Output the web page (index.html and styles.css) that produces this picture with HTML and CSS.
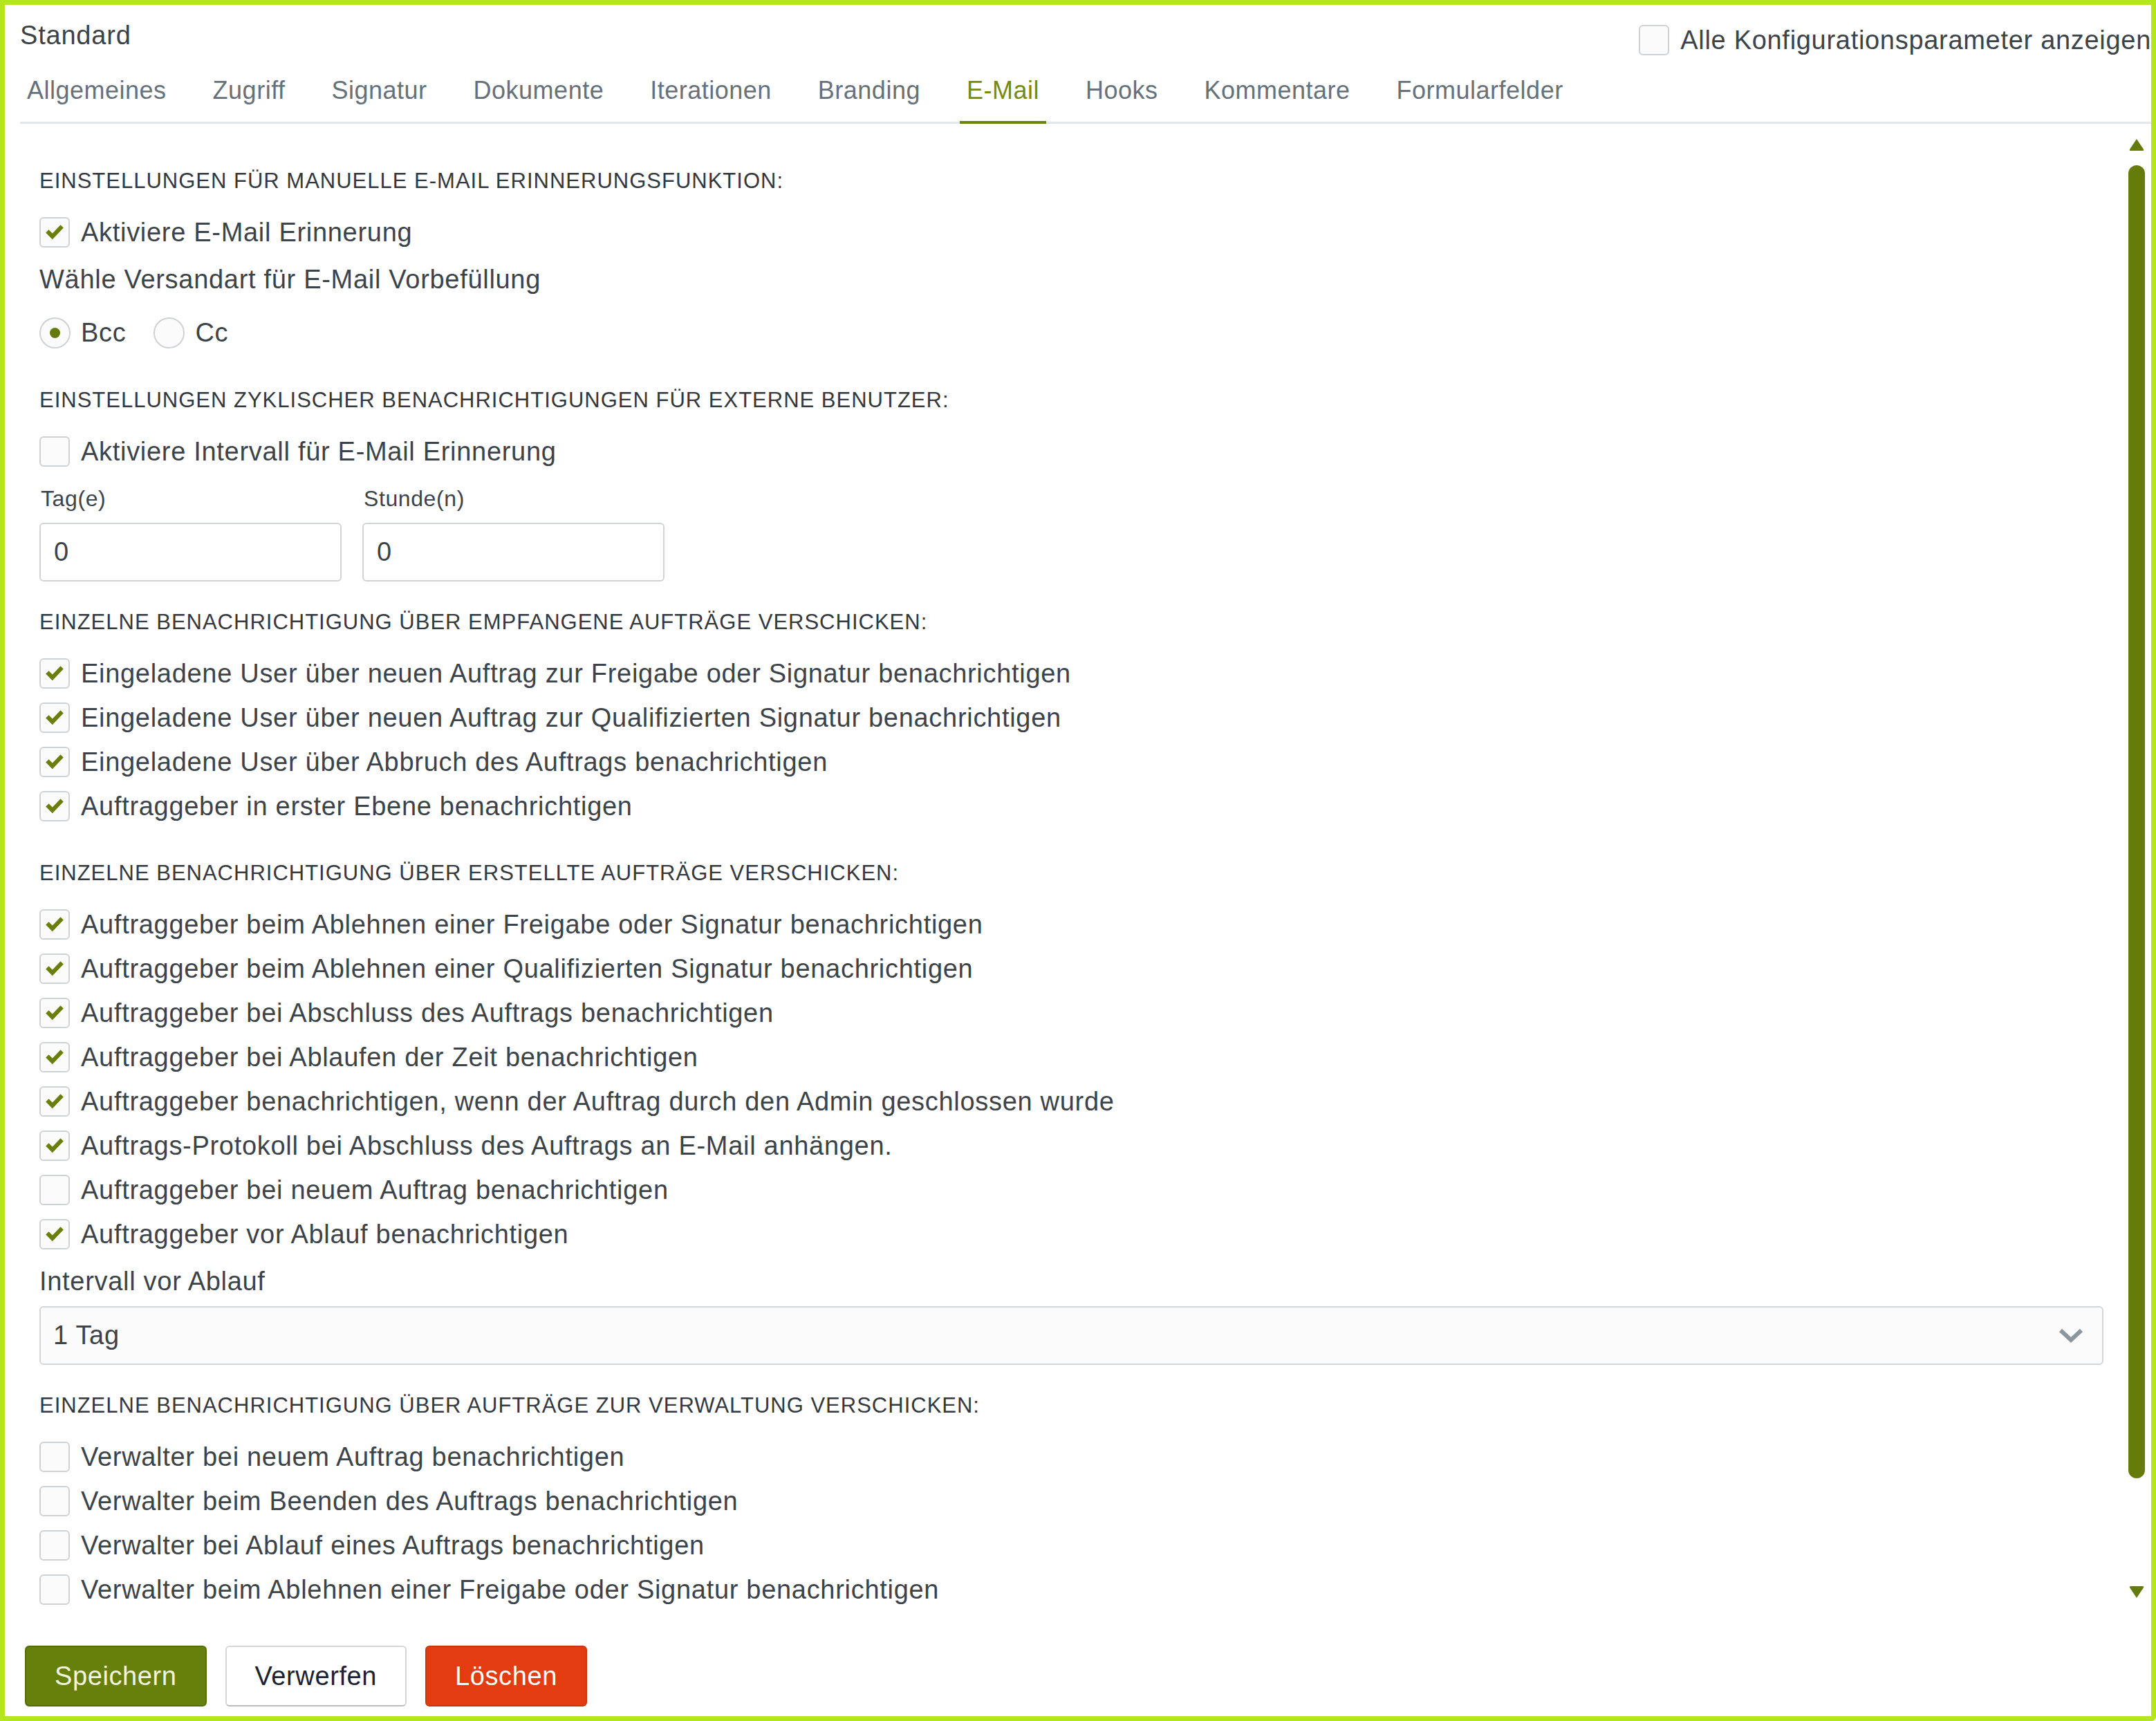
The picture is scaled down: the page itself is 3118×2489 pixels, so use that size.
FILE: index.html
```html
<!DOCTYPE html>
<html lang="de">
<head>
<meta charset="utf-8">
<title>Standard – E-Mail</title>
<link rel="stylesheet" href="styles.css">
</head>
<body>
<div class="frame">
  <header class="head">
    <div class="title-row">
      <h1 class="title">Standard</h1>
      <label class="check-row all-params">
        <span class="box"></span>
        <span>Alle Konfigurationsparameter anzeigen</span>
      </label>
    </div>
    <nav class="tabs">
      <a class="tab">Allgemeines</a>
      <a class="tab">Zugriff</a>
      <a class="tab">Signatur</a>
      <a class="tab">Dokumente</a>
      <a class="tab">Iterationen</a>
      <a class="tab">Branding</a>
      <a class="tab active">E-Mail</a>
      <a class="tab">Hooks</a>
      <a class="tab">Kommentare</a>
      <a class="tab">Formularfelder</a>
    </nav>
  </header>

  <div class="main">
    <div class="content">

      <section class="sec first">
        <h2 class="sec-title">EINSTELLUNGEN FÜR MANUELLE E-MAIL ERINNERUNGSFUNKTION:</h2>
        <div class="rows">
          <label class="check-row"><span class="box on"><svg viewBox="0 0 30 30"><path d="M3 15.5 L7 11.5 L12 16.5 L23 5 L27 9 L12 24.5 Z"/></svg></span><span>Aktiviere E-Mail Erinnerung</span></label>
        </div>
        <p class="field-label">Wähle Versandart für E-Mail Vorbefüllung</p>
        <div class="radios">
          <label class="radio-item"><span class="radio on"></span><span>Bcc</span></label>
          <label class="radio-item"><span class="radio"></span><span>Cc</span></label>
        </div>
      </section>

      <section class="sec">
        <h2 class="sec-title">EINSTELLUNGEN ZYKLISCHER BENACHRICHTIGUNGEN FÜR EXTERNE BENUTZER:</h2>
        <div class="rows">
          <label class="check-row"><span class="box"></span><span>Aktiviere Intervall für E-Mail Erinnerung</span></label>
        </div>
        <div class="interval">
          <span class="small-label">Tag(e)</span>
          <span class="small-label">Stunde(n)</span>
          <input class="num" type="text" value="0">
          <input class="num" type="text" value="0">
        </div>
      </section>

      <section class="sec after-field">
        <h2 class="sec-title">EINZELNE BENACHRICHTIGUNG ÜBER EMPFANGENE AUFTRÄGE VERSCHICKEN:</h2>
        <div class="rows">
          <label class="check-row"><span class="box on"><svg viewBox="0 0 30 30"><path d="M3 15.5 L7 11.5 L12 16.5 L23 5 L27 9 L12 24.5 Z"/></svg></span><span>Eingeladene User über neuen Auftrag zur Freigabe oder Signatur benachrichtigen</span></label>
          <label class="check-row"><span class="box on"><svg viewBox="0 0 30 30"><path d="M3 15.5 L7 11.5 L12 16.5 L23 5 L27 9 L12 24.5 Z"/></svg></span><span>Eingeladene User über neuen Auftrag zur Qualifizierten Signatur benachrichtigen</span></label>
          <label class="check-row"><span class="box on"><svg viewBox="0 0 30 30"><path d="M3 15.5 L7 11.5 L12 16.5 L23 5 L27 9 L12 24.5 Z"/></svg></span><span>Eingeladene User über Abbruch des Auftrags benachrichtigen</span></label>
          <label class="check-row"><span class="box on"><svg viewBox="0 0 30 30"><path d="M3 15.5 L7 11.5 L12 16.5 L23 5 L27 9 L12 24.5 Z"/></svg></span><span>Auftraggeber in erster Ebene benachrichtigen</span></label>
        </div>
      </section>

      <section class="sec">
        <h2 class="sec-title">EINZELNE BENACHRICHTIGUNG ÜBER ERSTELLTE AUFTRÄGE VERSCHICKEN:</h2>
        <div class="rows">
          <label class="check-row"><span class="box on"><svg viewBox="0 0 30 30"><path d="M3 15.5 L7 11.5 L12 16.5 L23 5 L27 9 L12 24.5 Z"/></svg></span><span>Auftraggeber beim Ablehnen einer Freigabe oder Signatur benachrichtigen</span></label>
          <label class="check-row"><span class="box on"><svg viewBox="0 0 30 30"><path d="M3 15.5 L7 11.5 L12 16.5 L23 5 L27 9 L12 24.5 Z"/></svg></span><span>Auftraggeber beim Ablehnen einer Qualifizierten Signatur benachrichtigen</span></label>
          <label class="check-row"><span class="box on"><svg viewBox="0 0 30 30"><path d="M3 15.5 L7 11.5 L12 16.5 L23 5 L27 9 L12 24.5 Z"/></svg></span><span>Auftraggeber bei Abschluss des Auftrags benachrichtigen</span></label>
          <label class="check-row"><span class="box on"><svg viewBox="0 0 30 30"><path d="M3 15.5 L7 11.5 L12 16.5 L23 5 L27 9 L12 24.5 Z"/></svg></span><span>Auftraggeber bei Ablaufen der Zeit benachrichtigen</span></label>
          <label class="check-row"><span class="box on"><svg viewBox="0 0 30 30"><path d="M3 15.5 L7 11.5 L12 16.5 L23 5 L27 9 L12 24.5 Z"/></svg></span><span>Auftraggeber benachrichtigen, wenn der Auftrag durch den Admin geschlossen wurde</span></label>
          <label class="check-row"><span class="box on"><svg viewBox="0 0 30 30"><path d="M3 15.5 L7 11.5 L12 16.5 L23 5 L27 9 L12 24.5 Z"/></svg></span><span>Auftrags-Protokoll bei Abschluss des Auftrags an E-Mail anhängen.</span></label>
          <label class="check-row"><span class="box"></span><span>Auftraggeber bei neuem Auftrag benachrichtigen</span></label>
          <label class="check-row"><span class="box on"><svg viewBox="0 0 30 30"><path d="M3 15.5 L7 11.5 L12 16.5 L23 5 L27 9 L12 24.5 Z"/></svg></span><span>Auftraggeber vor Ablauf benachrichtigen</span></label>
        </div>
        <p class="field-label">Intervall vor Ablauf</p>
        <div class="select">
          <span>1 Tag</span>
          <svg class="chevron" viewBox="0 0 36 22"><polyline points="3,3 18,17 33,3"/></svg>
        </div>
      </section>

      <section class="sec after-field">
        <h2 class="sec-title">EINZELNE BENACHRICHTIGUNG ÜBER AUFTRÄGE ZUR VERWALTUNG VERSCHICKEN:</h2>
        <div class="rows">
          <label class="check-row"><span class="box"></span><span>Verwalter bei neuem Auftrag benachrichtigen</span></label>
          <label class="check-row"><span class="box"></span><span>Verwalter beim Beenden des Auftrags benachrichtigen</span></label>
          <label class="check-row"><span class="box"></span><span>Verwalter bei Ablauf eines Auftrags benachrichtigen</span></label>
          <label class="check-row"><span class="box"></span><span>Verwalter beim Ablehnen einer Freigabe oder Signatur benachrichtigen</span></label>
        </div>
      </section>

    </div>

    <div class="scrollbar">
      <svg class="sb-arrow" viewBox="0 0 24 20"><path d="M12 2 L22 17 Q23 19 20 19 L4 19 Q1 19 2 17 Z"/></svg>
      <div class="sb-thumb"></div>
      <svg class="sb-arrow sb-down" viewBox="0 0 24 20"><path d="M12 18 L22 3 Q23 1 20 1 L4 1 Q1 1 2 3 Z"/></svg>
    </div>
  </div>

  <footer class="actions">
    <button class="btn btn-primary" type="button">Speichern</button>
    <button class="btn btn-default" type="button">Verwerfen</button>
    <button class="btn btn-danger" type="button">Löschen</button>
  </footer>
</div>
</body>
</html>
```

FILE: styles.css
```css
* {
  box-sizing: border-box;
}

html,
body {
  margin: 0;
  padding: 0;
}

body {
  width: 3118px;
  height: 2489px;
  background: #ffffff;
  font-family: "Liberation Sans", Arial, sans-serif;
  font-size: 38px;
  letter-spacing: 0.7px;
  color: #3c4349;
}

/* outer window */
.frame {
  width: 3118px;
  height: 2489px;
  border: 7px solid #b5e61d;
  border-radius: 0 0 6px 0;
  display: flex;
  flex-direction: column;
  overflow: hidden;
  background: #ffffff;
}

/* header: title, global toggle and tab strip */
.head {
  padding: 21px 0 0 22px;
}

.title-row {
  display: flex;
  justify-content: space-between;
  align-items: flex-start;
  height: 46px;
}

.title {
  margin: 0;
  font-size: 38px;
  font-weight: 400;
  line-height: 46px;
  letter-spacing: 0.8px;
  color: #3c4247;
}

.all-params {
  margin-top: 8px;
  white-space: nowrap;
}

.tabs {
  display: flex;
  gap: 47px;
  margin-top: 35px;
  border-bottom: 3px solid #e4e6e7;
}

.tab {
  padding: 0 10px 22px;
  line-height: 44px;
  font-size: 36px;
  letter-spacing: 0.5px;
  color: #66717a;
  border-bottom: 4px solid transparent;
  margin-bottom: -3px;
  white-space: nowrap;
}

.tab.active {
  color: #768a0e;
  border-bottom-color: #6d810d;
}

/* scrolling settings area */
.main {
  flex: 1;
  min-height: 0;
  display: flex;
  gap: 36px;
  padding-right: 9px;
}

.content {
  flex: 1;
  min-width: 0;
  padding: 63px 0 0 50px;
  overflow: hidden;
}

.sec {
  margin-top: 55px;
}

.sec.first {
  margin-top: 0;
}

.sec.after-field {
  margin-top: 39px;
}

.sec-title {
  margin: 0;
  font-size: 31px;
  font-weight: 400;
  line-height: 40px;
  letter-spacing: 1px;
  color: #33393e;
  white-space: nowrap;
}

.sec-title + .rows {
  margin-top: 32px;
}

.rows {
  display: flex;
  flex-direction: column;
  gap: 20px;
}

.check-row {
  display: flex;
  align-items: center;
  gap: 16px;
  height: 44px;
  white-space: nowrap;
}

.box {
  width: 44px;
  height: 44px;
  flex-shrink: 0;
  border: 2px solid #cfd2d4;
  border-radius: 6px;
  background: #fbfbfb;
  display: flex;
  align-items: center;
  justify-content: center;
}

.box svg {
  width: 32px;
  height: 32px;
}

.box path {
  fill: #6a7f0b;
}

.field-label {
  margin: 24px 0 0;
  line-height: 44px;
}

.radios {
  display: flex;
  gap: 40px;
  margin-top: 33px;
}

.radio-item {
  display: flex;
  align-items: center;
  gap: 15px;
  height: 45px;
}

.radio {
  width: 45px;
  height: 45px;
  border: 2px solid #cfd2d4;
  border-radius: 50%;
  background: #fbfbfb;
  display: flex;
  align-items: center;
  justify-content: center;
}

.radio.on::after {
  content: "";
  width: 15px;
  height: 15px;
  border-radius: 50%;
  background: #647a0b;
}

/* day / hour interval inputs */
.interval {
  display: grid;
  grid-template-columns: 437px 437px;
  column-gap: 30px;
  row-gap: 17px;
  margin-top: 28px;
}

.small-label {
  font-size: 32px;
  line-height: 36px;
  letter-spacing: 0.6px;
  padding-left: 2px;
  color: #3d4449;
}

.num {
  width: 437px;
  height: 85px;
  border: 2px solid #d1d4d6;
  border-radius: 6px;
  padding: 0 19px;
  font-family: "Liberation Sans", Arial, sans-serif;
  font-size: 38px;
  letter-spacing: 0.7px;
  color: #3c4349;
  background: #ffffff;
  outline: none;
}

.select {
  margin-top: 14px;
  height: 85px;
  border: 2px solid #d3d6d8;
  border-radius: 6px;
  background: #fbfbfb;
  display: flex;
  align-items: center;
  justify-content: space-between;
  padding: 0 27px 0 18px;
}

.chevron {
  width: 36px;
  height: 22px;
}

.chevron polyline {
  fill: none;
  stroke: #8c969e;
  stroke-width: 6;
}

/* custom scrollbar */
.scrollbar {
  width: 24px;
  display: flex;
  flex-direction: column;
  align-items: center;
  padding: 20px 0 32px;
}

.sb-arrow {
  width: 24px;
  height: 20px;
  flex-shrink: 0;
}

.sb-arrow path {
  fill: #647a0b;
}

.sb-thumb {
  width: 24px;
  height: 1899px;
  margin-top: 20px;
  border-radius: 12px;
  background: #657b0a;
}

.sb-down {
  margin-top: auto;
}

/* action buttons */
.actions {
  display: flex;
  gap: 27px;
  padding: 35px 0 14px 29px;
}

.btn {
  height: 88px;
  padding: 0 41px;
  border: 2px solid;
  border-radius: 6px;
  font-family: "Liberation Sans", Arial, sans-serif;
  font-size: 38px;
  letter-spacing: 0.6px;
  cursor: pointer;
}

.btn-primary {
  background: #677f0b;
  border-color: #566b07;
  color: #f1f5df;
}

.btn-default {
  background: #ffffff;
  border-color: #d5d5d5;
  border-bottom-color: #bdbdbd;
  color: #1c2230;
}

.btn-danger {
  background: #e23c10;
  border-color: #c9360e;
  color: #ffffff;
}
```
